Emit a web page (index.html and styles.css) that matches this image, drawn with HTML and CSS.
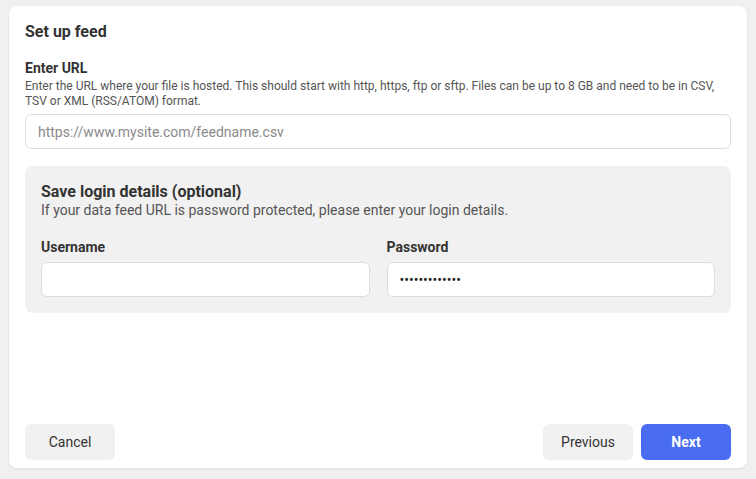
FILE: index.html
```html
<!DOCTYPE html>
<html lang="en">
<head>
<meta charset="utf-8">
<title>Set up feed</title>
<link rel="stylesheet" href="styles.css">
</head>
<body>
<div class="card">
  <h1 class="title">Set up feed</h1>
  <div class="field">
    <label class="label" for="url">Enter URL</label>
    <p class="help">Enter the URL where your file is hosted. This should start with http, https, ftp or sftp. Files can be up to 8 GB and need to be in CSV, TSV or XML (RSS/ATOM) format.</p>
    <input class="input" id="url" type="text" placeholder="https://www.mysite.com/feedname.csv">
  </div>
  <div class="login">
    <h2 class="login-title">Save login details (optional)</h2>
    <p class="login-sub">If your data feed URL is password protected, please enter your login details.</p>
    <div class="login-grid">
      <div class="col">
        <label class="col-label" for="user">Username</label>
        <input class="input" id="user" type="text">
      </div>
      <div class="col">
        <label class="col-label" for="pass">Password</label>
        <input class="input" id="pass" type="password" value="mypassword123">
      </div>
    </div>
  </div>
  <div class="actions">
    <button class="btn">Cancel</button>
    <div class="right">
      <button class="btn">Previous</button>
      <button class="btn primary">Next</button>
    </div>
  </div>
</div>
</body>
</html>
```
FILE: styles.css
```css
html, body {
  margin: 0;
  padding: 0;
  background: #f0f0f0;
  font-family: Roboto, "Liberation Sans", sans-serif;
  color: #333;
}
body {
  padding: 6px 9px;
}
.card {
  box-sizing: border-box;
  height: 462px;
  background: #fff;
  border-radius: 8px;
  box-shadow: 0 1px 3px rgba(0,0,0,0.08);
  padding: 16px 16px 8px;
  display: flex;
  flex-direction: column;
}
.title {
  margin: 0;
  font-size: 16px;
  line-height: 19px;
  font-weight: 700;
  color: #333;
}
.field {
  margin-top: 19px;
  display: flex;
  flex-direction: column;
}
.label {
  font-size: 14px;
  line-height: 16px;
  font-weight: 700;
  color: #333;
}
.help {
  margin: 3px 0 0;
  font-size: 12px;
  line-height: 15px;
  color: #555;
}
.input {
  box-sizing: border-box;
  height: 35px;
  width: 100%;
  border: 1px solid #dcdcdc;
  border-radius: 6px;
  background: #fff;
  padding: 0 12px;
  font-family: Roboto, "Liberation Sans", sans-serif;
  font-size: 14px;
  color: #222;
  outline: none;
}
.input::placeholder {
  color: #8a8a8a;
}
.field .input {
  margin-top: 5px;
}
.login {
  margin-top: 17px;
  background: #f1f1f1;
  border-radius: 8px;
  padding: 16px;
}
.login-title {
  margin: 0;
  font-size: 16px;
  line-height: 19px;
  font-weight: 700;
  color: #333;
}
.login-sub {
  margin: 0;
  font-size: 14px;
  line-height: 18px;
  color: #555;
}
.login-grid {
  margin-top: 20px;
  display: grid;
  grid-template-columns: 1fr 1fr;
  gap: 17px;
}
.col {
  display: flex;
  flex-direction: column;
}
.col-label {
  font-size: 14px;
  line-height: 16px;
  font-weight: 700;
  color: #333;
  margin-bottom: 7px;
}
.actions {
  margin-top: auto;
  display: flex;
  justify-content: space-between;
}
.right {
  display: flex;
  gap: 8px;
}
.btn {
  width: 90px;
  height: 36px;
  border: none;
  border-radius: 6px;
  background: #f1f1f1;
  font-family: Roboto, "Liberation Sans", sans-serif;
  font-size: 14px;
  color: #333;
  cursor: pointer;
}
.btn.primary {
  background: #4a6cf0;
  color: #fff;
  font-weight: 700;
}
```
